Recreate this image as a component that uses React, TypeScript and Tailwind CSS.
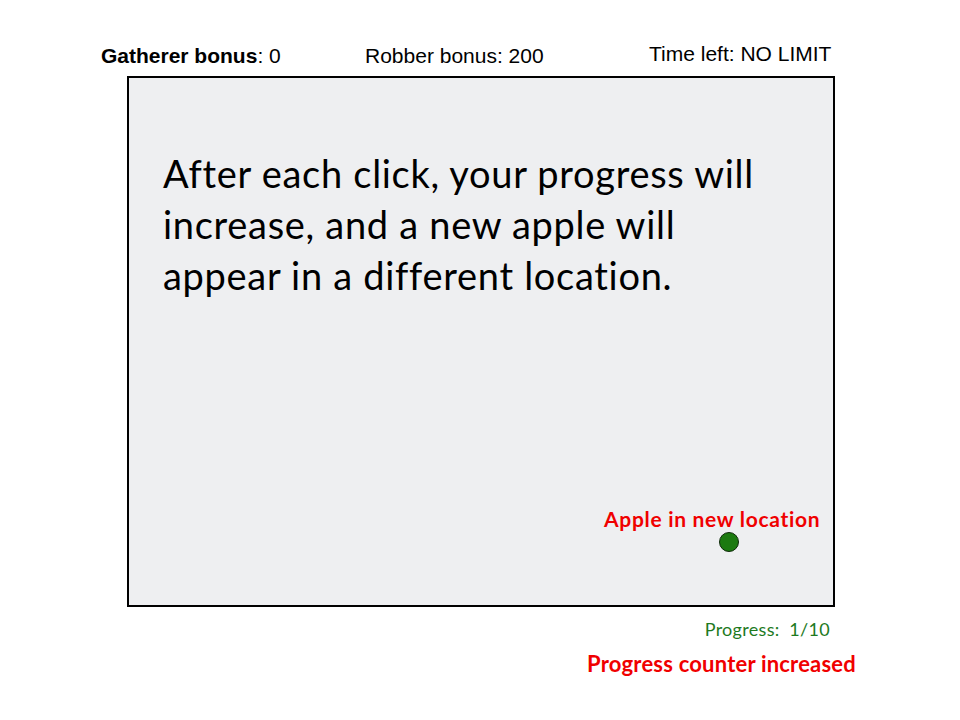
import React from 'react';

const slideFont = { fontFamily: 'Lato, "Open Sans", sans-serif' };
const labelFont = { fontFamily: '"Liberation Sans", Arial, sans-serif' };

export default function App() {
  return (
    <div className="w-[960px] h-[720px] bg-white text-black flex flex-col" style={slideFont}>
      {/* Top score labels */}
      <div className="flex items-end h-[67px] text-[21px] leading-none" style={labelFont}>
        <div className="ml-[101px] w-[264px] mb-[1px]">
          <span className="font-bold">Gatherer bonus</span>: 0
        </div>
        <div className="w-[284px] mb-[1px]">Robber bonus: 200</div>
        <div className="mb-[3px]">Time left: NO LIMIT</div>
      </div>

      {/* Game area */}
      <div className="ml-[127px] mt-[9px] w-[708px] h-[531px] border-2 border-black bg-[#eeeff1] relative">
        <p className="pl-[34px] pt-[70px] text-[38px] leading-[51px] tracking-[0.7px]">
          After each click, your progress will
          <br />
          increase, and a new apple will
          <br />
          appear in a different location.
        </p>
        <div className="absolute left-[475px] top-[430px] text-[21px] font-bold text-[#f00000] leading-none tracking-[0.7px]">
          Apple in new location
        </div>
        <div className="absolute left-[590px] top-[454px] w-[20px] h-[20px] rounded-full bg-[#1c7a10] border border-[#0f2a0a]" />
      </div>

      {/* Footer */}
      <div className="w-[830px] flex flex-col items-end">
        <div className="mt-[13px] text-[18px] leading-none text-[#1e7a1e] tracking-[0.3px]">Progress:&nbsp; 1/10</div>
        <div className="mt-[15px] mr-[-26px] text-[22px] leading-none font-bold text-[#f00000] tracking-[0.2px]">
          Progress counter increased
        </div>
      </div>
    </div>
  );
}
